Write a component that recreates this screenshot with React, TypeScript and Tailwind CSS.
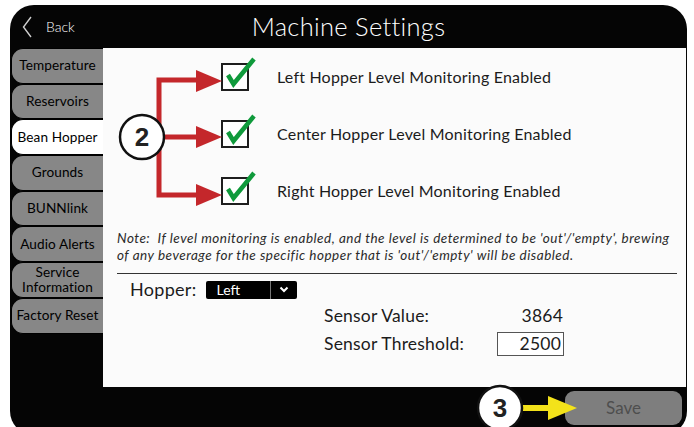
import React from 'react';

const tabs = [
  'Temperature',
  'Reservoirs',
  'Bean Hopper',
  'Grounds',
  'BUNNlink',
  'Audio Alerts',
  'Service Information',
  'Factory Reset',
];

const options = [
  'Left Hopper Level Monitoring Enabled',
  'Center Hopper Level Monitoring Enabled',
  'Right Hopper Level Monitoring Enabled',
];

function CheckBox() {
  return (
    <div className="relative h-[28px] w-[28px] shrink-0 border-2 border-[#1e1e1e] bg-white">
      <svg className="absolute -left-[2px] -top-[2px] overflow-visible" width="28" height="28" viewBox="0 0 28 28">
        <path d="M7 12 L12.5 21 L33 -4" fill="none" stroke="#0f9a3b" strokeWidth="4.5" strokeLinejoin="miter" strokeLinecap="butt" />
      </svg>
    </div>
  );
}

function Annotations() {
  return (
    <svg className="pointer-events-none absolute left-0 top-0" width="694" height="427" viewBox="0 0 694 427">
      {/* red arrows to checkboxes */}
      <g fill="#c4272b" stroke="#c4272b">
        <path d="M197 80 H159 V195 H197 M159 137 H197" fill="none" strokeWidth="5" />
        <polygon points="196,70 222,81 196,92" stroke="none" />
        <polygon points="196,126 222,137 196,148" stroke="none" />
        <polygon points="196,184 222,195 196,206" stroke="none" />
      </g>
      <circle cx="142" cy="137" r="22" fill="white" stroke="#111" strokeWidth="2.5" />
      <text x="142" y="146" textAnchor="middle" fontSize="26" fontWeight="700" fontFamily="Liberation Sans, Arial, sans-serif" fill="#222">2</text>

      {/* yellow arrow to Save */}
      <g fill="#f3e21a">
        <rect x="520" y="405" width="30" height="6" />
        <polygon points="548,396 577,408 548,420" />
      </g>
      <circle cx="500" cy="408" r="22" fill="white" stroke="#111" strokeWidth="2.5" />
      <text x="500" y="417" textAnchor="middle" fontSize="26" fontWeight="700" fontFamily="Liberation Sans, Arial, sans-serif" fill="#222">3</text>
    </svg>
  );
}

export default function App() {
  return (
    <div className="relative h-[427px] w-[694px] overflow-hidden bg-white font-['Lato',sans-serif]">
      <div className="ml-[10px] mt-[5px] flex h-[430px] w-[677px] flex-col rounded-[24px] bg-[#050505]">
        {/* header */}
        <div className="relative flex h-[43px] shrink-0 items-center justify-center">
          <div className="absolute left-[12px] top-0 flex h-full items-center gap-[14px] text-white">
            <svg width="10" height="22" viewBox="0 0 10 22">
              <path d="M9 1 L1.5 11 L9 21" fill="none" stroke="#cfcfcf" strokeWidth="1.4" />
            </svg>
            <span className="text-[14px] font-light">Back</span>
          </div>
          <h1 className="text-[25.5px] font-light tracking-[0.3px] text-white">Machine Settings</h1>
        </div>

        {/* body */}
        <div className="flex h-[339px] shrink-0 pr-[1px]">
          <div className="flex w-[93px] shrink-0 flex-col pl-[1px]">
            {tabs.map((t) => {
              const active = t === 'Bean Hopper';
              return (
                <div
                  key={t}
                  className={
                    'flex h-[35.7px] items-center justify-center rounded-l-[12px] border border-r-0 border-black text-center text-[13.6px] leading-[15px] tracking-[0.1px] text-black ' +
                    (active ? 'bg-white' : 'bg-[#878787]')
                  }
                >
                  {t === 'Service Information' ? (
                    <span>
                      Service
                      <br />
                      Information
                    </span>
                  ) : (
                    t
                  )}
                </div>
              );
            })}
          </div>

          <div className="flex flex-1 flex-col bg-[#fbfbfb] pl-[14px] pr-[9px] text-[#1c1c1c]">
            <div className="flex flex-col gap-[29px] pl-[104px] pt-[15px]">
              {options.map((o) => (
                <div key={o} className="flex items-center gap-[28px]">
                  <CheckBox />
                  <span className="text-[16px] tracking-[0.2px]">{o}</span>
                </div>
              ))}
            </div>

            <p className="mt-[25px] text-[13.5px] italic leading-[17px] tracking-[0.5px] text-[#2a2a2a]">
              Note:&nbsp; If level monitoring is enabled, and the level is determined to be 'out'/'empty', brewing of any
              beverage for the specific hopper that is 'out'/'empty' will be disabled.
            </p>
            <div className="mt-[9px] h-px bg-[#333]" />

            <div className="mt-[2px] flex items-center pl-[13px]">
              <span className="text-[18px] tracking-[0.3px]">Hopper:</span>
              <div className="ml-[9px] flex h-[18px] w-[91px] items-center rounded-[2px] bg-black text-white">
                <span className="flex-1 pl-[11px] text-[14px] leading-none">Left</span>
                <div className="flex h-full w-[27px] items-center justify-center border-l border-[#777]">
                  <svg width="10" height="7" viewBox="0 0 10 7">
                    <path d="M1.5 1.5 L5 5 L8.5 1.5" fill="none" stroke="white" strokeWidth="2" />
                  </svg>
                </div>
              </div>
            </div>

            <div className="ml-[207px] mt-0 flex w-[240px] flex-col gap-[2px] text-[17.5px] tracking-[0.2px]">
              <div className="flex items-center justify-between pr-[1px]">
                <span>Sensor Value:</span>
                <span>3864</span>
              </div>
              <div className="flex items-center justify-between">
                <span>Sensor Threshold:</span>
                <div className="flex h-[24px] w-[67px] items-center justify-end border border-[#555] bg-white pr-[2px]">
                  2500
                </div>
              </div>
            </div>
          </div>
        </div>

        {/* footer */}
        <div className="flex h-[40px] shrink-0 items-start justify-end pr-[5px] pt-[4px]">
          <div className="flex h-[34px] w-[117px] items-center justify-center rounded-[9px] bg-[#7e7e7e] text-[17px] text-[#4e4e4e]">
            Save
          </div>
        </div>
      </div>
      <Annotations />
    </div>
  );
}
